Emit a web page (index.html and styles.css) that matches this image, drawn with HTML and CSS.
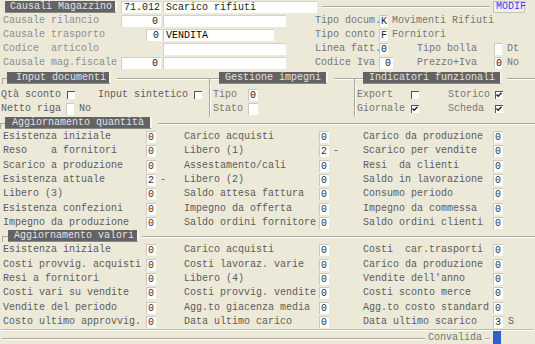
FILE: index.html
```html
<!DOCTYPE html>
<html>
<head>
<meta charset="utf-8">
<link rel="stylesheet" href="styles.css">
</head>
<body>
<div class="form">
  <div class="top">
    <div class="row">
      <span class="hdr h-caus">Causali Magazzino</span>
      <span class="in ra w40 ml4">71.012</span>
      <span class="in w154 ml2">Scarico rifiuti</span>
      <span class="hline"></span>
      <span class="modif">MODIF</span>
    </div>
    <div class="row pl3">
      <span class="lbl dim w118">Causale rilancio</span>
      <span class="in ra w40">0</span>
      <span class="in w123 ml2"></span>
      <span class="sp w29"></span>
      <span class="lbl gr w64">Tipo docum.</span>
      <span class="box w9">K</span>
      <span class="lbl gr ml4">Movimenti Rifiuti</span>
    </div>
    <div class="row pl3">
      <span class="lbl dim w143">Causale trasporto</span>
      <span class="in ra w16">0</span>
      <span class="in w111 ml1 dark">VENDITA</span>
      <span class="sp w41"></span>
      <span class="lbl gr w64">Tipo conto</span>
      <span class="box w9">F</span>
      <span class="lbl gr ml4">Fornitori</span>
    </div>
    <div class="row pl3">
      <span class="lbl dim w160">Codice  articolo</span>
      <span class="in w123"></span>
      <span class="sp w29"></span>
      <span class="lbl gr w64">Linea fatt.</span>
      <span class="box w9">0</span>
      <span class="sp w29"></span>
      <span class="lbl gr w77">Tipo bolla</span>
      <span class="box w8"></span>
      <span class="lbl gr ml5">Dt</span>
    </div>
    <div class="row pl3">
      <span class="lbl dim w118">Causale mag.fiscale</span>
      <span class="in ra w40">0</span>
      <span class="in w123 ml2"></span>
      <span class="sp w29"></span>
      <span class="lbl gr w64">Codice Iva</span>
      <span class="box ra w14">0</span>
      <span class="sp w24"></span>
      <span class="lbl gr w77">Prezzo+Iva</span>
      <span class="box w8">0</span>
      <span class="lbl gr ml5">No</span>
    </div>
  </div>

  <div class="middle">
    <div class="grp g1">
      <div class="ghead">
        <span class="corner"></span>
        <span class="hdr h-inp">Input documenti</span>
        <span class="gline end"></span>
      </div>
      <div class="gbody sideline">
        <div class="row pl1">
          <span class="lbl w66">Qtà sconto</span>
          <span class="cb"></span>
          <span class="sp w23"></span>
          <span class="lbl w96">Input sintetico</span>
          <span class="cb"></span>
        </div>
        <div class="row pl1">
          <span class="lbl w65">Netto riga</span>
          <span class="box w8"></span>
          <span class="lbl ml5">No</span>
        </div>
      </div>
    </div>
    <div class="grp g2">
      <div class="ghead">
        <span class="gline lead9"></span>
        <span class="hdr h-ges">Gestione impegni</span>
        <span class="gline end"></span>
      </div>
      <div class="gbody sideline">
        <div class="row pl3">
          <span class="lbl gr w35">Tipo</span>
          <span class="box w10">0</span>
        </div>
        <div class="row pl3">
          <span class="lbl gr w35">Stato</span>
          <span class="box w10"></span>
        </div>
      </div>
    </div>
    <div class="grp g3">
      <div class="ghead">
        <span class="gline lead8"></span>
        <span class="hdr h-ind">Indicatori funzionali</span>
        <span class="gline tail"></span>
      </div>
      <div class="gbody">
        <div class="row pl2">
          <span class="lbl gr w54">Export</span>
          <span class="cb"></span>
          <span class="sp w29"></span>
          <span class="lbl gr w47">Storico</span>
          <span class="cb"><svg viewBox="0 0 8 8" width="8" height="8"><path d="M1.5 3.5 L3.2 5.3 L6.5 1.8" fill="none" stroke="#222" stroke-width="1.4"/></svg></span>
        </div>
        <div class="row pl2">
          <span class="lbl gr w54">Giornale</span>
          <span class="cb"><svg viewBox="0 0 8 8" width="8" height="8"><path d="M1.5 3.5 L3.2 5.3 L6.5 1.8" fill="none" stroke="#222" stroke-width="1.4"/></svg></span>
          <span class="sp w29"></span>
          <span class="lbl gr w47">Scheda</span>
          <span class="cb"><svg viewBox="0 0 8 8" width="8" height="8"><path d="M1.5 3.5 L3.2 5.3 L6.5 1.8" fill="none" stroke="#222" stroke-width="1.4"/></svg></span>
        </div>
      </div>
    </div>
  </div>

  <div class="sect qta">
    <div class="ghead">
      <span class="corner"></span>
      <span class="hdr h-qta">Aggiornamento quantità</span>
      <span class="gline tail6"></span>
    </div>
    <div class="grid">
      <span class="lbl">Esistenza iniziale</span><span class="cell"><span class="v">0</span></span><span></span>
      <span class="lbl">Carico acquisti</span><span class="cell"><span class="v">0</span></span><span></span>
      <span class="lbl">Carico da produzione</span><span class="cell"><span class="v">0</span></span>

      <span class="lbl">Reso    a fornitori</span><span class="cell"><span class="v">0</span></span><span></span>
      <span class="lbl">Libero (1)</span><span class="cell"><span class="v">2</span></span><span class="dash">-</span>
      <span class="lbl">Scarico per vendite</span><span class="cell"><span class="v">0</span></span>

      <span class="lbl">Scarico a produzione</span><span class="cell"><span class="v">0</span></span><span></span>
      <span class="lbl">Assestamento/cali</span><span class="cell"><span class="v">0</span></span><span></span>
      <span class="lbl">Resi  da clienti</span><span class="cell"><span class="v">0</span></span>

      <span class="lbl">Esistenza attuale</span><span class="cell"><span class="v">2</span></span><span class="dash">-</span>
      <span class="lbl">Libero (2)</span><span class="cell"><span class="v">0</span></span><span></span>
      <span class="lbl">Saldo in lavorazione</span><span class="cell"><span class="v">0</span></span>

      <span class="lbl">Libero (3)</span><span class="cell"><span class="v">0</span></span><span></span>
      <span class="lbl">Saldo attesa fattura</span><span class="cell"><span class="v">0</span></span><span></span>
      <span class="lbl">Consumo periodo</span><span class="cell"><span class="v">0</span></span>

      <span class="lbl">Esistenza confezioni</span><span class="cell"><span class="v">0</span></span><span></span>
      <span class="lbl">Impegno da offerta</span><span class="cell"><span class="v">0</span></span><span></span>
      <span class="lbl">Impegno da commessa</span><span class="cell"><span class="v">0</span></span>

      <span class="lbl">Impegno da produzione</span><span class="cell"><span class="v">0</span></span><span></span>
      <span class="lbl">Saldo ordini fornitore</span><span class="cell"><span class="v">0</span></span><span></span>
      <span class="lbl">Saldo ordini clienti</span><span class="cell"><span class="v">0</span></span>
    </div>
  </div>

  <div class="sect val">
    <div class="ghead">
      <span class="corner c6"></span>
      <span class="hdr h-val">Aggiornamento valori</span>
      <span class="gline tail3"></span>
    </div>
    <div class="grid">
      <span class="lbl">Esistenza iniziale</span><span class="cell"><span class="v">0</span></span><span></span>
      <span class="lbl">Carico acquisti</span><span class="cell"><span class="v">0</span></span><span></span>
      <span class="lbl">Costi  car.trasporti</span><span class="cell"><span class="v">0</span></span>

      <span class="lbl">Costi provvig. acquisti</span><span class="cell"><span class="v">0</span></span><span></span>
      <span class="lbl">Costi lavoraz. varie</span><span class="cell"><span class="v">0</span></span><span></span>
      <span class="lbl">Carico da produzione</span><span class="cell"><span class="v">0</span></span>

      <span class="lbl">Resi a fornitori</span><span class="cell"><span class="v">0</span></span><span></span>
      <span class="lbl">Libero (4)</span><span class="cell"><span class="v">0</span></span><span></span>
      <span class="lbl">Vendite dell'anno</span><span class="cell"><span class="v">0</span></span>

      <span class="lbl">Costi vari su vendite</span><span class="cell"><span class="v">0</span></span><span></span>
      <span class="lbl">Costi provvig. vendite</span><span class="cell"><span class="v">0</span></span><span></span>
      <span class="lbl">Costi sconto merce</span><span class="cell"><span class="v">0</span></span>

      <span class="lbl">Vendite del periodo</span><span class="cell"><span class="v">0</span></span><span></span>
      <span class="lbl">Agg.to giacenza media</span><span class="cell"><span class="v">0</span></span><span></span>
      <span class="lbl">Agg.to costo standard</span><span class="cell"><span class="v">0</span></span>

      <span class="lbl">Costo ultimo approvvig.</span><span class="cell"><span class="v">0</span></span><span></span>
      <span class="lbl">Data ultimo carico</span><span class="cell"><span class="v">0</span></span><span></span>
      <span class="lbl">Data ultimo scarico</span><span class="cell"><span class="v">3</span><span class="suf">S</span></span>
    </div>
    <div class="gbottom"></div>
  </div>

  <div class="foot">
    <span class="gline fill"></span>
    <span class="lbl gr conv">Convalida</span>
    <span class="gline short"></span>
    <span class="bluebar"></span>
  </div>
</div>
</body>
</html>
```

FILE: styles.css
```css
* { box-sizing: border-box; margin: 0; padding: 0; }
html, body { background: #ECE9D8; }
body {
  margin: 0;
  width: 535px;
  height: 344px;
  overflow: hidden;
  font: 10px/12px "Liberation Mono", "DejaVu Sans Mono", monospace;
  color: #555;
}
.form { width: 535px; }

.row { display: flex; align-items: center; height: 14px; }
.pl1 { padding-left: 1px; }
.pl2 { padding-left: 2px; }
.pl3 { padding-left: 3px; }
.ml1 { margin-left: 1px; }
.ml2 { margin-left: 2px; }
.ml4 { margin-left: 4px; }
.ml5 { margin-left: 5px; }

.w8 { width: 8px; } .w9 { width: 9px; } .w10 { width: 10px; } .w14 { width: 14px; }
.w16 { width: 16px; } .w23 { width: 23px; } .w24 { width: 24px; } .w29 { width: 29px; }
.w35 { width: 35px; } .w40 { width: 40px; } .w41 { width: 41px; } .w47 { width: 47px; }
.w54 { width: 54px; } .w64 { width: 64px; } .w65 { width: 65px; } .w66 { width: 66px; }
.w77 { width: 77px; } .w96 { width: 96px; } .w111 { width: 111px; } .w118 { width: 118px; }
.w123 { width: 123px; } .w143 { width: 143px; } .w154 { width: 154px; } .w160 { width: 160px; }

.sp { flex: none; height: 1px; }
.lbl { flex: none; white-space: pre; color: #606060; }
.lbl.dim { color: #8e8e8e; }
.lbl.gr { color: #767676; }

.in {
  flex: none;
  height: 12px;
  background: #fff;
  border-top: 1px solid #d0d0d0;
  border-left: 1px solid #d0d0d0;
  color: #222;
  padding: 0 2px;
  line-height: 11px;
  overflow: hidden;
  white-space: pre;
}
.in.ra { text-align: right; padding-right: 3px; }
.in.dark { color: #000; }

.box {
  flex: none;
  height: 12px;
  background: #fff;
  border-left: 1px solid #c8c8c8;
  border-top: 1px solid #c8c8c8;
  color: #222;
  line-height: 11px;
  padding-left: 1px;
  overflow: hidden;
}
.box.ra { text-align: right; padding-right: 2px; }

.hdr {
  flex: none;
  height: 12px;
  background: #636363;
  color: #e2e2e2;
  line-height: 11px;
  border-right: 2px solid #f4f4f4;
  border-bottom: 1px solid #8a8a8a;
  white-space: pre;
}
.h-caus { width: 112px; margin-left: 5px; padding-left: 5px; }
.h-inp { width: 104px; padding-left: 9px; }
.h-ges { width: 109px; padding-left: 6px; }
.h-ind { width: 139px; padding-left: 6px; }
.h-qta { width: 147px; padding-left: 7px; }
.h-val { width: 131px; padding-left: 6px; }

.hline {
  flex: 1;
  margin: 0 3px 0 5px;
  height: 2px;
  border-top: 1px solid #a8a8a0;
  border-bottom: 1px solid #fff;
}
.modif {
  flex: none;
  width: 32px;
  height: 12px;
  margin-right: 10px;
  background: #f2f0e6;
  border: 1px solid #c4c2b8;
  color: #3a3aff;
  line-height: 10px;
  padding-left: 2px;
}

/* group boxes */
.middle { display: flex; margin-top: 2px; height: 45px; }
.g1 { width: 210px; padding-left: 2px; }
.g2 { width: 145px; }
.g3 { flex: 1; }
.grp { display: flex; flex-direction: column; }
.ghead { display: flex; height: 12px; align-items: stretch; }
.corner {
  flex: none;
  width: 5px;
  height: 6px;
  align-self: flex-end;
  border-top: 1px solid #a8a8a0;
  border-left: 1px solid #a8a8a0;
}
.corner.c6 { width: 6px; margin-left: 2px; }
.gline {
  flex: none;
  height: 6px;
  align-self: flex-end;
  border-top: 1px solid #a8a8a0;
  box-shadow: inset 0 1px 0 #fff;
}
.gline.end { flex: 1; margin-left: 6px; border-right: 1px solid #a8a8a0; }
.gline.lead9 { width: 9px; }
.gline.lead8 { width: 8px; }
.gline.tail { flex: 1; margin-left: 5px; }
.gline.tail6 { flex: 1; margin-left: 6px; }
.gline.tail3 { flex: 1; margin-left: 3px; }
.gbody { flex: 1; padding-top: 4px; }
.sideline { border-right: 1px solid #a8a8a0; box-shadow: 1px 0 0 #fff; }
.g1 .gbody { margin-left: -2px; }

.cb {
  flex: none;
  width: 8px;
  height: 8px;
  background: #fff;
  border-top: 1px solid #555;
  border-left: 1px solid #555;
  display: flex;
}
.cb svg { display: block; margin: -1px 0 0 -1px; }

/* data sections */
.sect { margin-top: 0; }
.qta .grid { grid-template-rows: repeat(7, 14.33px); padding-top: 1px; }
.val .grid { grid-template-rows: repeat(6, 14.33px); padding-top: 1px; }
.grid {
  display: grid;
  grid-template-columns: 143px 10px 28px 135px 10px 34px 130px 40px;
  padding-left: 3px;
  align-items: center;
}
.grid .lbl { color: #5c5c5c; }
.cell { display: flex; align-items: center; }
.v {
  display: block;
  width: 10px;
  height: 12px;
  background: #fff;
  border-left: 1px solid #c8c8c8;
  border-top: 1px solid #c8c8c8;
  color: #333;
  line-height: 11px;
  padding-left: 1px;
}
.suf { margin-left: 5px; color: #606060; }
.dash { padding-left: 4px; color: #5c5c5c; }

.gbottom {
  height: 2px;
  margin: 0 1px;
  border-top: 1px solid #c0beb0;
  border-bottom: 1px solid #fff;
}

.foot {
  display: flex;
  align-items: flex-end;
  height: 13px;
  padding-left: 2px;
}
.foot .gline { height: 6px; }
.gline.fill { flex: 1; }
.gline.short { width: 5px; margin-left: 3px; }
.conv { margin-left: 3px; line-height: 12px; }
.bluebar {
  flex: none;
  width: 8px;
  height: 13px;
  margin-left: 3px;
  margin-right: 34px;
  background: #2f5fd0;
}
```
